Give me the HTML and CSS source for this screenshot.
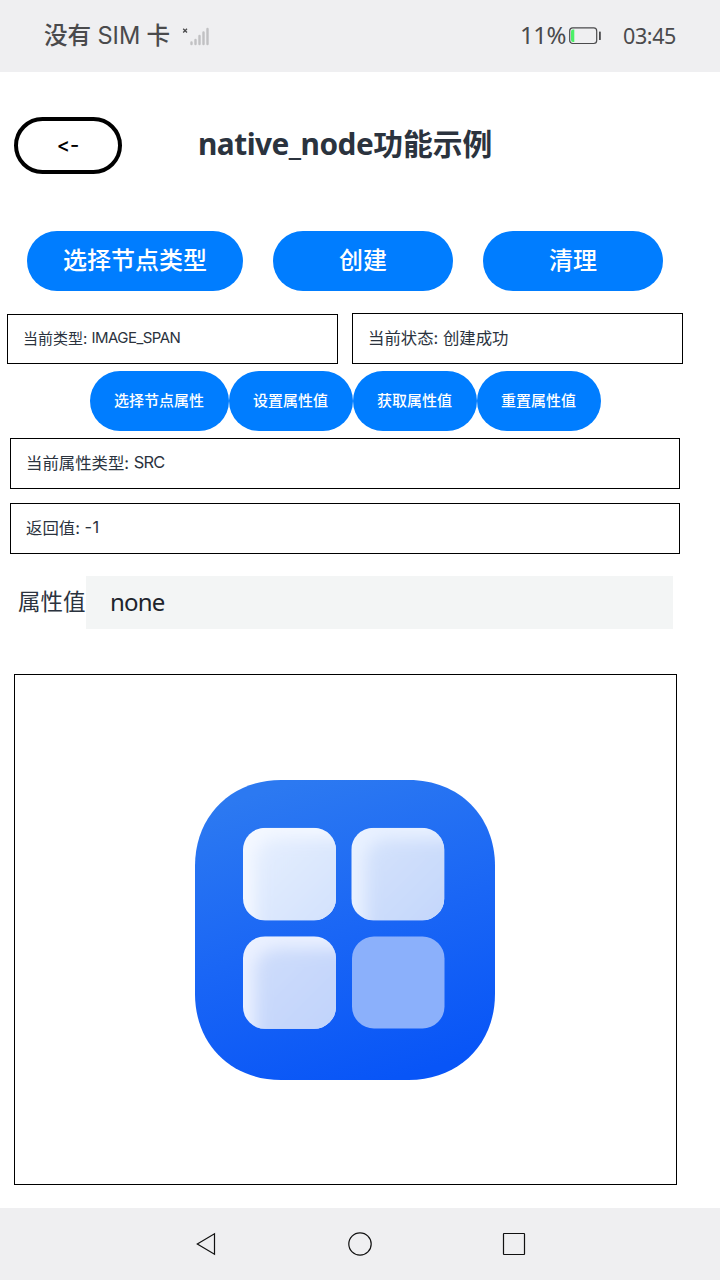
FILE: index.html
```html
<!DOCTYPE html>
<html lang="zh-CN">
<head>
<meta charset="utf-8">
<title>native_node功能示例</title>
<link rel="stylesheet" href="styles.css">
</head>
<body>
<header class="status">
  <div class="carrier">没有 <span class="sim">SIM</span> 卡</div>
  <svg class="signal" width="28" height="20" viewBox="0 0 28 20">
    <path d="M1.200 1.700l3.800 3.800M5 1.700L1.200 5.500" stroke="#4a4a4c" stroke-width="1.300"/>
    <path d="M9.500 15.500V17M13.500 13V17M17.500 9V17M21.500 5.500V17M25.500 2V17" stroke="#c1c1c3" stroke-width="2.400" stroke-linecap="round"/>
  </svg>
  <div class="percent">11%</div>
  <svg class="battery" width="34" height="18" viewBox="0 0 34 18">
    <rect x=".7" y=".9" width="27" height="15.600" rx="3" fill="none" stroke="#4a4a4c" stroke-width="1.200"/>
    <path d="M2 4.500a2 2 0 0 1 2-2h1.300v12.500H4a2 2 0 0 1-2-2z" fill="#4bf067"/>
    <rect x="30" y="4.500" width="1.800" height="8.500" rx=".6" fill="#4a4a4c"/>
  </svg>
  <div class="clock">03:45</div>
</header>
<main class="page">
  <div class="heading">
    <button class="back">&lt;-</button>
    <h1 class="title"><span class="title-latin">native_node</span>功能示例</h1>
  </div>
  <div class="actions">
    <button class="btn wide">选择节点类型</button>
    <button class="btn">创建</button>
    <button class="btn">清理</button>
  </div>
  <div class="states">
    <div class="box type">当前类型:&nbsp;<span class="type-value">IMAGE_SPAN</span></div>
    <div class="box">当前状态: 创建成功</div>
  </div>
  <div class="attrs">
    <button class="btn small first">选择节点属性</button>
    <button class="btn small">设置属性值</button>
    <button class="btn small">获取属性值</button>
    <button class="btn small">重置属性值</button>
  </div>
  <div class="results">
    <div class="box">当前属性类型:&nbsp;<span class="src">SRC</span></div>
    <div class="box">返回值:&nbsp;<span class="ret">-1</span></div>
  </div>
  <div class="field">
    <label class="label" for="value">属性值</label>
    <input class="input" id="value" value="none">
  </div>
  <section class="preview">
    <svg width="300" height="300" viewBox="0 0 300 300">
      <defs>
        <linearGradient id="bg" x1=".35" y1="0" x2=".65" y2="1"><stop offset="0" stop-color="#2c79f1"/><stop offset=".5" stop-color="#1a66f5"/><stop offset="1" stop-color="#0855f7"/></linearGradient>
        <linearGradient id="t1" x1="0" y1="0" x2="1" y2="1"><stop offset="0" stop-color="#e6effe"/><stop offset="1" stop-color="#cbdcfc"/></linearGradient>
        <linearGradient id="t2" x1="0" y1="0" x2="1" y2="1"><stop offset="0" stop-color="#d5e3fc"/><stop offset="1" stop-color="#bcd1fa"/></linearGradient>
        <linearGradient id="t3" x1="0" y1="0" x2="1" y2="1"><stop offset="0" stop-color="#cfddfb"/><stop offset="1" stop-color="#bacffc"/></linearGradient>
        <filter id="soft" x="-30%" y="-30%" width="160%" height="160%"><feGaussianBlur stdDeviation="8"/></filter>
        <clipPath id="tile"><rect width="93" height="92.500" rx="22"/></clipPath>
      </defs>
      <path d="M86 0H214C264 0 300 36 300 86V214C300 264 264 300 214 300H86C36 300 0 264 0 214V86C0 36 36 0 86 0Z" fill="url(#bg)"/>
      <g transform="translate(48 47.800)"><g clip-path="url(#tile)"><rect width="93" height="93" fill="#f4f8ff"/><rect x="12" y="10" width="115" height="115" rx="22" fill="url(#t1)" filter="url(#soft)"/></g></g>
      <g transform="translate(156.300 47.800)"><g clip-path="url(#tile)"><rect width="93" height="93" fill="#e9f1ff"/><rect x="14" y="11" width="115" height="115" rx="22" fill="url(#t2)" filter="url(#soft)"/></g></g>
      <g transform="translate(48 156.300)"><g clip-path="url(#tile)"><rect width="93" height="93" fill="#ebf1ff"/><rect x="12" y="12" width="115" height="115" rx="22" fill="url(#t3)" filter="url(#soft)"/></g></g>
      <rect x="157" y="156.500" width="92.500" height="92" rx="22" fill="#8bb0fb"/>
    </svg>
  </section>
</main>
<nav class="nav">
  <svg width="24" height="24" viewBox="0 0 24 24"><path d="M3.300 12L20.500 1.800V22.200Z"/></svg>
  <svg width="24" height="24" viewBox="0 0 24 24"><circle cx="12" cy="12" r="11.200"/></svg>
  <svg width="24" height="24" viewBox="0 0 24 24"><rect x="1.500" y="1.500" width="21" height="21" rx=".5"/></svg>
</nav>
</body>
</html>
```
FILE: styles.css
```css
* { box-sizing: border-box; }
body {
  margin: 0;
  width: 720px;
  height: 1280px;
  display: flex;
  flex-direction: column;
  background: #fff;
  color: #2b333e;
  font-family: Inter, "Noto Sans CJK SC", sans-serif;
  overflow: hidden;
}
button, input { font: inherit; border: 0; margin: 0; padding: 0; }
.status {
  height: 72px;
  display: flex;
  align-items: center;
  background: #efeff1;
  color: #4a4a4c;
  padding: 0 43px 0 44px;
  white-space: nowrap;
  font-size: 24px;
  line-height: 36px;
}
.carrier { width: 138px; font-weight: 500; font-size: 23.600px; }
.sim { font-weight: 400; }
.signal { margin-top: 1px; }
.percent { margin-left: 310px; width: 49px; font-family: "Noto Sans", sans-serif; letter-spacing: -0.500px; padding-bottom: 2px; }
.clock { margin-left: 20px; font-family: "Noto Sans", sans-serif; font-size: 21.500px; letter-spacing: -0.400px; padding-bottom: 1px; }
.signal, .battery { flex: none; }
.page { height: 1136px; padding-top: 45px; }
.heading { display: flex; align-items: center; height: 57px; padding-left: 14px; }
.back {
  width: 108px;
  height: 57px;
  padding-bottom: 2px;
  border: 4px solid #000;
  border-radius: 29px;
  background: #fff;
  color: #000;
  font-family: Inter, sans-serif;
  font-size: 20px;
  font-weight: 500;
  font-variant-ligatures: none;
  font-feature-settings: "calt" 0;
}
.title { margin: 0 0 0 76px; padding-bottom: 4px; font-size: 29.800px; line-height: 40px; font-weight: 700; white-space: nowrap; }
.title-latin { font-family: "Noto Sans", sans-serif; letter-spacing: -0.500px; }
.actions { display: flex; gap: 30px; margin-top: 57px; padding-left: 27px; }
.btn {
  width: 180px;
  height: 60px;
  padding-bottom: 5px;
  border-radius: 30px;
  background: #007dff;
  color: #fff;
  font-size: 24px;
  font-weight: 500;
  white-space: nowrap;
}
.wide { width: 216px; }
.states { display: flex; align-items: flex-end; gap: 14px; margin-top: 22px; padding-left: 7px; }
.box {
  display: flex;
  align-items: center;
  height: 51px;
  padding: 0 0 4px 15px;
  border: 1px solid #000;
  font-size: 16.400px;
  white-space: nowrap;
}
.states .box { width: 331px; }
.states .type { height: 50px; padding-bottom: 3px; font-size: 15px; }
.type-value { letter-spacing: -0.550px; }
.src { letter-spacing: -0.700px; }
.ret { letter-spacing: 0.500px; }
.attrs { display: flex; margin: 7px 0 0 90px; }
.small { width: 124px; padding: 0 1px 4px 0; font-size: 15px; }
.first { width: 139px; }
.results { display: flex; flex-direction: column; gap: 14px; margin: 7px 40px 0 10px; }
.field { display: flex; align-items: center; margin: 22px 0 0 18px; }
.label { width: 68px; padding-bottom: 5px; font-size: 22.500px; white-space: nowrap; }
.input {
  width: 587px;
  height: 53px;
  padding: 0 0 3px 24px;
  background: #f3f5f5;
  color: #20242c;
  font-family: "Noto Sans", sans-serif;
  font-size: 24px;
  letter-spacing: -0.800px;
}
.preview {
  display: flex;
  align-items: center;
  justify-content: center;
  width: 663px;
  height: 511px;
  margin: 45px 0 0 14px;
  padding-right: 1px;
  border: 1px solid #000;
}
.nav { height: 72px; display: flex; align-items: center; justify-content: center; gap: 130px; background: #efeff1; }
.nav svg { fill: none; stroke: #111; stroke-width: 1.200; }
```
